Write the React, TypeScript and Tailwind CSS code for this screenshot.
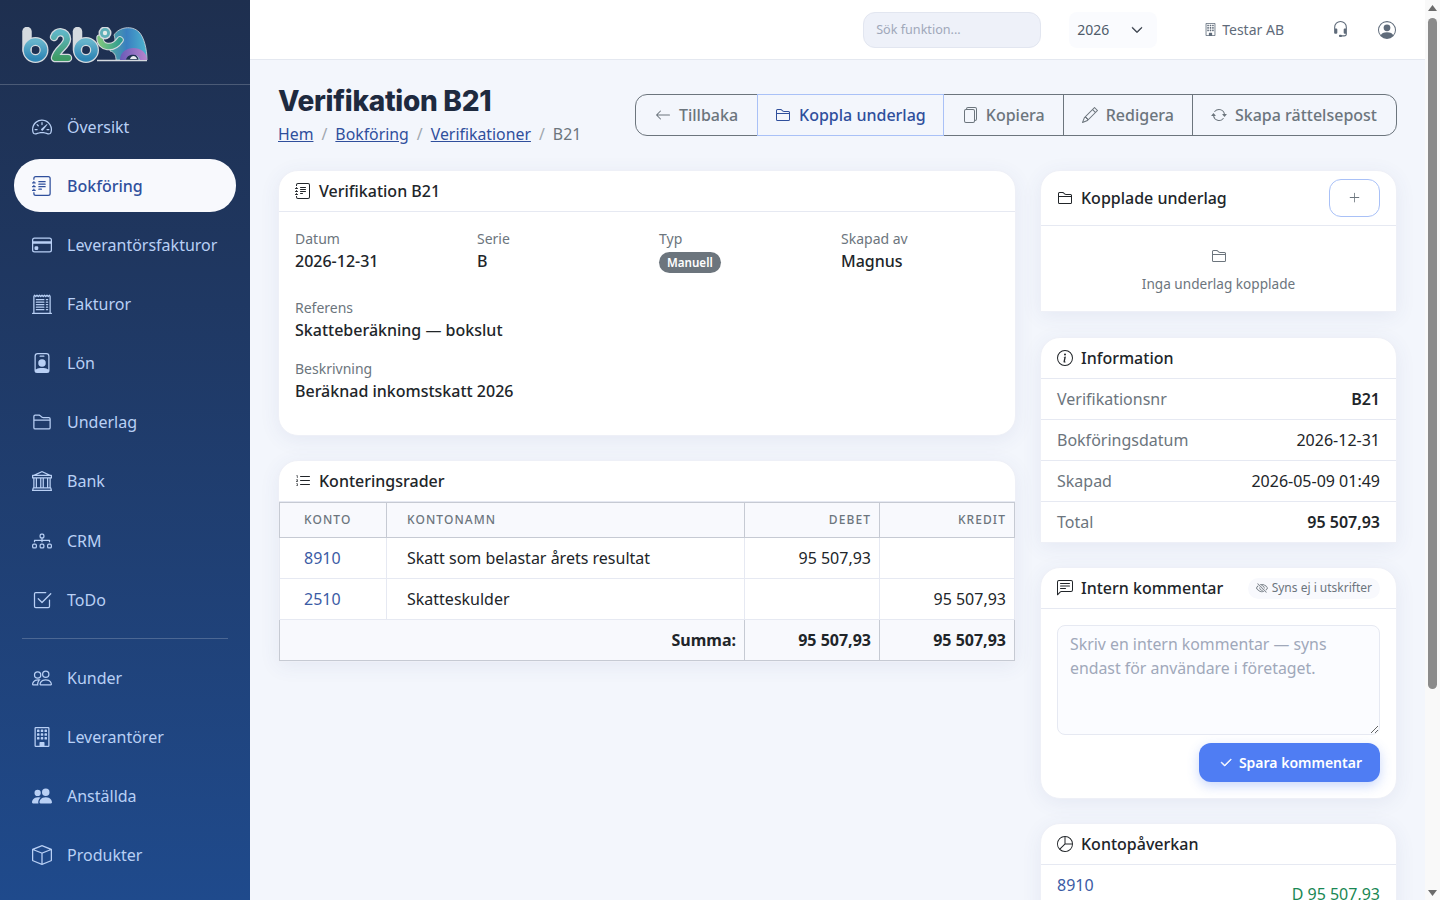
import type { ReactNode } from "react";
import type { IconType } from "react-icons";
import {
  BsArrowLeft,
  BsArrowRepeat,
  BsBank,
  BsBox,
  BsBuilding,
  BsChatLeftText,
  BsCheck2,
  BsCheck2Square,
  BsChevronDown,
  BsCreditCard,
  BsDiagram3,
  BsEyeSlash,
  BsFiles,
  BsFolder2,
  BsHeadset,
  BsInfoCircle,
  BsJournalText,
  BsListOl,
  BsPencil,
  BsPeople,
  BsPeopleFill,
  BsPersonBadge,
  BsPersonCircle,
  BsPieChart,
  BsPlusLg,
  BsReceiptCutoff,
  BsSpeedometer2,
} from "react-icons/bs";

const navTop: [string, IconType][] = [
  ["Översikt", BsSpeedometer2],
  ["Bokföring", BsJournalText],
  ["Leverantörsfakturor", BsCreditCard],
  ["Fakturor", BsReceiptCutoff],
  ["Lön", BsPersonBadge],
  ["Underlag", BsFolder2],
  ["Bank", BsBank],
  ["CRM", BsDiagram3],
  ["ToDo", BsCheck2Square],
];

const navBottom: [string, IconType][] = [
  ["Kunder", BsPeople],
  ["Leverantörer", BsBuilding],
  ["Anställda", BsPeopleFill],
  ["Produkter", BsBox],
];

function NavItem({ label, icon: Icon, active }: { label: string; icon: IconType; active?: boolean }) {
  return (
    <div
      className={
        active
          ? "mx-[14px] my-[3px] flex h-[53.15px] shrink-0 items-center gap-[15px] rounded-[26px] bg-[#f8f9fd] px-[18px] font-medium text-[#2f4f9c]"
          : "mx-[14px] my-[3px] flex h-[53.15px] shrink-0 items-center gap-[15px] rounded-[26px] px-[18px] text-[#b9d0f5]"
      }
    >
      <Icon className="h-5 w-5 shrink-0" />
      <span>{label}</span>
    </div>
  );
}

function Logo() {
  const b = (x: number) => (
    <g fill="none" strokeLinecap="round" key={x}>
      <path d={`M${x + 5} 4.5V23`} stroke="#d5dadf" strokeWidth="9.5" />
      <circle cx={x + 13.5} cy="23" r="8.5" stroke="#d5dadf" strokeWidth="9" />
      <path d={`M${x + 5} 4.5V23`} stroke="url(#lb)" strokeWidth="7" />
      <circle cx={x + 13.5} cy="23" r="8.5" stroke="url(#lb)" strokeWidth="6.5" />
    </g>
  );
  return (
    <svg width="126" height="36" viewBox="0 0 126 36">
      <defs>
        <linearGradient id="lb" x1="0" y1="0" x2="0" y2="1">
          <stop offset="0" stopColor="#66b4cc" />
          <stop offset="1" stopColor="#2f86b5" />
        </linearGradient>
        <linearGradient id="lg" x1="0" y1="0" x2="0" y2="1">
          <stop offset="0" stopColor="#5fb6c6" />
          <stop offset="1" stopColor="#3f9c66" />
        </linearGradient>
        <linearGradient id="le" x1="0" y1="0" x2="1" y2="0">
          <stop offset="0" stopColor="#4fa7a0" />
          <stop offset="0.45" stopColor="#3a7fc0" />
          <stop offset="1" stopColor="#4db5cf" />
        </linearGradient>
        <linearGradient id="lp" x1="0" y1="0" x2="1" y2="0">
          <stop offset="0" stopColor="#6a5ab8" />
          <stop offset="1" stopColor="#b885cc" />
        </linearGradient>
        <linearGradient id="lt" x1="0" y1="0" x2="1" y2="0">
          <stop offset="0" stopColor="#7cc47e" />
          <stop offset="1" stopColor="#2f9d8f" />
        </linearGradient>
      </defs>
      {b(0)}
      <g fill="none" strokeLinecap="round" strokeLinejoin="round">
        <path d="M32 10c2-7 13-6 13 2 0 7-10 10-12 19h13" stroke="#d5dadf" strokeWidth="8.5" />
        <path d="M32 10c2-7 13-6 13 2 0 7-10 10-12 19h13" stroke="url(#lg)" strokeWidth="6" />
      </g>
      {b(50.5)}
      <path d="M75 33.5H125" stroke="#d5dadf" strokeWidth="1.6" />
      <path d="M88 20c5-1 6-7 4-12 5-8 18-10 25-3 5 5 8 17 8 28h-8c-1-9-14-9-15 0h-8c0-5-2-8-6-9z" fill="url(#le)" stroke="#d5dadf" strokeWidth="0.8" />
      <path d="M98 33c0-16 27-16 27 0h-7c-1-7-13-7-14 0z" fill="url(#lp)" />
      <path d="M108 32c1-4 6-4 7 0z" fill="#e8ebef" />
      <path d="M78 11c0 10 13 12 20 2" fill="none" stroke="#d5dadf" strokeWidth="7.5" strokeLinecap="round" />
      <path d="M78 11c0 10 13 12 20 2" fill="none" stroke="url(#lt)" strokeWidth="5.5" strokeLinecap="round" />
      <circle cx="83" cy="6" r="6.5" fill="#d5dadf" />
      <circle cx="83" cy="6" r="5" fill="#5fb0b8" />
      <circle cx="83" cy="6" r="2.2" fill="#e3ebe8" />
    </svg>
  );
}

function Sidebar() {
  return (
    <aside className="flex h-full w-[250px] shrink-0 flex-col overflow-hidden bg-gradient-to-b from-[#1e2f4f] to-[#1f4a8c]">
      <div className="flex h-[85px] shrink-0 items-start border-b border-white/20 pl-[22px] pt-[27px]">
        <Logo />
      </div>
      <nav className="flex flex-col pt-[12px]">
        {navTop.map(([label, icon]) => (
          <NavItem key={label} label={label} icon={icon} active={label === "Bokföring"} />
        ))}
        <div className="mx-[22px] my-[9px] shrink-0 border-t border-white/20" />
        {navBottom.map(([label, icon]) => (
          <NavItem key={label} label={label} icon={icon} />
        ))}
      </nav>
    </aside>
  );
}

function TopBar() {
  return (
    <header className="flex h-[60px] items-center justify-end border-b border-[#e4e8f0] bg-white text-sm text-[#5f6b7a]">
      <div className="flex h-9 w-[178px] items-center rounded-xl border border-[#e2e6f0] bg-[#eef1f9] px-3 text-[12.6px] text-[#a0a8ba]">
        Sök funktion...
      </div>
      <div className="ml-7 flex h-9 w-[88px] items-center justify-between rounded-lg bg-[#fafbfe] pl-2 pr-[14px] text-[#4f5b6b]">
        <span>2026</span>
        <BsChevronDown className="h-3 w-3 stroke-[1] text-[#333a45]" />
      </div>
      <div className="ml-[47px] flex items-center gap-[5px]">
        <BsBuilding className="h-[13px] w-[13px]" />
        <span>Testar AB</span>
      </div>
      <BsHeadset className="ml-[48px] h-[17px] w-[17px]" />
      <BsPersonCircle className="ml-[29px] mr-[29px] h-[18px] w-[18px]" />
    </header>
  );
}

function ActionButton({ icon: Icon, children, primary }: { icon: IconType; children: ReactNode; primary?: boolean }) {
  return (
    <div
      className={
        primary
          ? "relative z-10 -ml-px flex h-[42px] items-center gap-2 border border-[#a9c1f7] px-[17px] font-medium text-[#2f4f9c]"
          : "-ml-px flex h-[42px] items-center gap-2 border border-[#6c757d] px-[18px] font-medium text-[#6c757d] first:ml-0 first:rounded-l-xl first:px-[19px] last:rounded-r-xl last:pr-[19px]"
      }
    >
      <Icon className="h-4 w-4 shrink-0" />
      <span>{children}</span>
    </div>
  );
}

const cardBase = "overflow-hidden border border-[#eef0f7] bg-white shadow-[0_4px_20px_rgba(60,80,140,0.08)]";

function Card({ icon: Icon, title, children, flat }: { icon: IconType; title: string; children: ReactNode; flat?: boolean }) {
  return (
    <section className={flat ? `${cardBase} rounded-t-[20px]` : `${cardBase} rounded-[20px]`}>
      <div className="flex h-[41px] items-center gap-2 border-b border-[#e6e9f2] px-4 font-medium text-[#212529]">
        <Icon className="h-4 w-4 shrink-0" />
        <span>{title}</span>
      </div>
      {children}
    </section>
  );
}

function Field({ label, value, className }: { label: string; value: ReactNode; className?: string }) {
  return (
    <div className={className}>
      <div className="text-sm leading-[21px] text-[#6c757d]">{label}</div>
      <div className="font-medium leading-6 text-[#212529]">{value}</div>
    </div>
  );
}

function VerificationCard() {
  return (
    <Card icon={BsJournalText} title="Verifikation B21">
      <div className="h-[223px] px-4 pt-4">
        <div className="grid grid-cols-4 gap-x-6">
          <Field label="Datum" value="2026-12-31" />
          <Field label="Serie" value="B" />
          <div>
            <div className="text-sm leading-[21px] text-[#6c757d]">Typ</div>
            <span className="inline-flex h-[21px] items-center rounded-full bg-[#6c757d] px-2 text-[11.6px] font-semibold text-white">
              Manuell
            </span>
          </div>
          <Field label="Skapad av" value="Magnus" />
        </div>
        <Field label="Referens" value="Skatteberäkning — bokslut" className="mt-[24px]" />
        <Field label="Beskrivning" value="Beräknad inkomstskatt 2026" className="mt-[16px]" />
      </div>
    </Card>
  );
}

const thBase = "h-[35px] border border-[#c6cad3] bg-[#f8f9fd] px-2 text-xs font-medium tracking-[0.09em] text-[#6c757d]";
const tdBase = "h-[41px] border border-[#e6e9f2] px-2 text-[#212529]";
const footBase = "h-[41px] border border-[#c6cad3] bg-[#f8f9fd] px-2 text-right font-bold text-[#212529]";

function LinesCard() {
  return (
    <Card icon={BsListOl} title="Konteringsrader" flat>
      <table className="w-full table-fixed border-collapse">
        <colgroup>
          <col className="w-[107px]" />
          <col />
          <col className="w-[135px]" />
          <col className="w-[135px]" />
        </colgroup>
        <thead>
          <tr>
            <th className={`${thBase} pl-[24px] text-left`}>KONTO</th>
            <th className={`${thBase} pl-[20px] text-left`}>KONTONAMN</th>
            <th className={`${thBase} text-right`}>DEBET</th>
            <th className={`${thBase} text-right`}>KREDIT</th>
          </tr>
        </thead>
        <tbody>
          <tr>
            <td className={`${tdBase} pl-[24px] !text-[#3b5ba5]`}>8910</td>
            <td className={`${tdBase} pl-[20px]`}>Skatt som belastar årets resultat</td>
            <td className={`${tdBase} text-right`}>95 507,93</td>
            <td className={tdBase} />
          </tr>
          <tr>
            <td className={`${tdBase} pl-[24px] !text-[#3b5ba5]`}>2510</td>
            <td className={`${tdBase} pl-[20px]`}>Skatteskulder</td>
            <td className={tdBase} />
            <td className={`${tdBase} text-right`}>95 507,93</td>
          </tr>
          <tr>
            <td colSpan={2} className={footBase}>Summa:</td>
            <td className={footBase}>95 507,93</td>
            <td className={footBase}>95 507,93</td>
          </tr>
        </tbody>
      </table>
    </Card>
  );
}

function InfoRow({ label, value, bold }: { label: string; value: string; bold?: boolean }) {
  return (
    <div className="flex h-[41px] items-center justify-between border-b border-[#e6e9f2] px-4 last:h-[40px] last:border-b-0">
      <span className="text-[#6c757d]">{label}</span>
      <span className={bold ? "font-semibold text-[#212529]" : "text-[#212529]"}>{value}</span>
    </div>
  );
}

function RightColumn() {
  return (
    <div className="flex w-[357px] shrink-0 flex-col gap-6">
      <section className={`${cardBase} mb-px rounded-t-[20px]`}>
        <div className="flex h-[55px] items-center justify-between border-b border-[#e6e9f2] px-4 pb-[1px]">
          <div className="flex items-center gap-2 font-medium text-[#212529]">
            <BsFolder2 className="h-4 w-4" />
            <span>Kopplade underlag</span>
          </div>
          <div className="flex h-[38px] w-[51px] items-center justify-center rounded-xl border border-[#a9c1f7] text-[#6c757d]">
            <BsPlusLg className="h-[13px] w-[13px]" />
          </div>
        </div>
        <div className="flex h-[85px] flex-col items-center pt-[22px] text-[13.6px] text-[#6c757d]">
          <BsFolder2 className="h-4 w-4" />
          <span className="mt-[10px]">Inga underlag kopplade</span>
        </div>
      </section>

      <section className={`${cardBase} rounded-t-[20px]`}>
        <div className="flex h-[41px] items-center gap-2 border-b border-[#e6e9f2] px-4 font-medium text-[#212529]">
          <BsInfoCircle className="h-4 w-4" />
          <span>Information</span>
        </div>
        <InfoRow label="Verifikationsnr" value="B21" bold />
        <InfoRow label="Bokföringsdatum" value="2026-12-31" />
        <InfoRow label="Skapad" value="2026-05-09 01:49" />
        <InfoRow label="Total" value="95 507,93" bold />
      </section>

      <section className="rounded-[20px] border border-[#eef0f7] bg-white shadow-[0_4px_20px_rgba(60,80,140,0.08)]">
        <div className="flex h-[41px] items-center justify-between border-b border-[#e6e9f2] px-4">
          <div className="flex items-center gap-2 font-medium text-[#212529]">
            <BsChatLeftText className="h-4 w-4" />
            <span>Intern kommentar</span>
          </div>
          <span className="flex h-[21px] items-center gap-[4px] rounded-full bg-[#f8f9fd] pl-2 pr-2 text-xs text-[#6c757d]">
            <BsEyeSlash className="h-3 w-3" />
            Syns ej i utskrifter
          </span>
        </div>
        <div className="p-4">
          <textarea
            readOnly
            rows={4}
            placeholder="Skriv en intern kommentar — syns endast för användare i företaget."
            className="block h-[110px] w-full rounded-lg border border-[#e6e9f2] bg-[#fbfcff] px-3 py-[6px] text-[15.85px] leading-6 placeholder:text-[#a0a8ba]"
          />
          <div className="mt-2 flex justify-end">
            <div className="flex h-[39px] items-center gap-[6px] rounded-xl bg-[#4f7df3] pl-5 pr-[18px] text-sm font-semibold text-white shadow-[0_4px_12px_rgba(79,125,243,0.3)]">
              <BsCheck2 className="h-[14px] w-[14px] stroke-[0.8]" />
              Spara kommentar
            </div>
          </div>
        </div>
      </section>

      <section className={`${cardBase} rounded-[20px]`}>
        <div className="flex h-[41px] items-center gap-2 border-b border-[#e6e9f2] px-4 font-medium text-[#212529]">
          <BsPieChart className="h-4 w-4" />
          <span>Kontopåverkan</span>
        </div>
        <div className="flex h-[58px] items-center justify-between px-4">
          <div className="self-start pt-2 leading-6 text-[#3b5ba5]">8910</div>
          <span className="text-[#198754]">D 95 507,93</span>
        </div>
      </section>
    </div>
  );
}

function Scrollbar() {
  return (
    <div className="flex h-full w-[15px] shrink-0 flex-col items-center bg-[#f9f9f9]">
      <svg width="9" height="6" viewBox="0 0 9 6" className="mt-[5px] shrink-0">
        <path d="M4.5 0L9 6H0z" fill="#6b6b6b" />
      </svg>
      <div className="mt-[7px] h-[671px] w-[9px] shrink-0 rounded-[5px] bg-[#8b8b8b]" />
      <svg width="9" height="6" viewBox="0 0 9 6" className="mb-[4px] mt-auto shrink-0">
        <path d="M4.5 6L9 0H0z" fill="#6b6b6b" />
      </svg>
    </div>
  );
}

export default function App() {
  return (
    <div className="flex h-screen overflow-hidden bg-[#f3f6fc] font-['Noto_Sans',sans-serif] text-[#212529]">
      <Sidebar />
      <div className="h-full min-w-0 flex-1 overflow-hidden">
        <TopBar />
        <main className="px-[28px] pt-[20px]">
          <div className="flex items-start justify-between">
            <div>
              <h1 className="font-['Inter',sans-serif] text-[28px] font-extrabold leading-[42px] tracking-[-0.01em] text-[#1e2a3f]">
                Verifikation B21
              </h1>
              <div className="flex items-center gap-2 text-[15.84px] leading-6 text-[#6c757d]">
                <span className="text-[#2f4f9c] underline">Hem</span>
                <span className="text-[#a0a6ae]">/</span>
                <span className="text-[#2f4f9c] underline">Bokföring</span>
                <span className="text-[#a0a6ae]">/</span>
                <span className="text-[#2f4f9c] underline">Verifikationer</span>
                <span className="text-[#a0a6ae]">/</span>
                <span>B21</span>
              </div>
            </div>
            <div className="mt-[14px] flex rounded-xl">
              <ActionButton icon={BsArrowLeft}>Tillbaka</ActionButton>
              <ActionButton icon={BsFolder2} primary>Koppla underlag</ActionButton>
              <ActionButton icon={BsFiles}>Kopiera</ActionButton>
              <ActionButton icon={BsPencil}>Redigera</ActionButton>
              <ActionButton icon={BsArrowRepeat}>Skapa rättelsepost</ActionButton>
            </div>
          </div>
          <div className="mt-[24px] flex items-start gap-6">
            <div className="flex min-w-0 flex-1 flex-col gap-6">
              <VerificationCard />
              <LinesCard />
            </div>
            <RightColumn />
          </div>
        </main>
      </div>
      <Scrollbar />
    </div>
  );
}
